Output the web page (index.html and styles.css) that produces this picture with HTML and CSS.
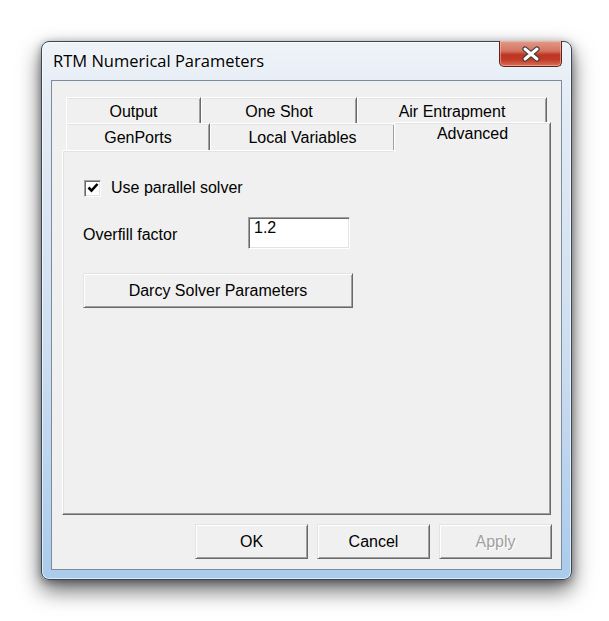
FILE: index.html
```html
<!DOCTYPE html>
<html>
<head>
<meta charset="utf-8">
<link rel="stylesheet" href="styles.css">
</head>
<body>
<div class="stage">
  <div class="window">
    <div class="titlebar">
      <span class="title">RTM Numerical Parameters</span>
      <div class="close">
        <svg width="20" height="16" viewBox="0 0 20 16">
          <path d="M4 3 L16 13 M16 3 L4 13" stroke="#3b3b3b" stroke-width="5.2" stroke-linecap="round" fill="none"/>
          <path d="M4 3 L16 13 M16 3 L4 13" stroke="#ffffff" stroke-width="3" stroke-linecap="round" fill="none"/>
        </svg>
      </div>
    </div>
    <div class="client">
      <div class="tabctl">
        <div class="tabrow back">
          <div class="tab w-output">Output</div>
          <div class="tab w-oneshot">One Shot</div>
          <div class="tab w-air">Air Entrapment</div>
        </div>
        <div class="tabrow front">
          <div class="tab w-genports">GenPorts</div>
          <div class="tab w-local">Local Variables</div>
          <div class="tab selected w-adv">Advanced</div>
        </div>
        <div class="panel">
          <div class="check-row">
            <span class="checkbox">
              <svg width="12" height="12" viewBox="0 0 12 12">
                <path d="M1.5 5.5 L4.5 8.7 L10.5 2" stroke="#000" stroke-width="2.6" fill="none"/>
              </svg>
            </span>
            <span class="check-label">Use parallel solver</span>
          </div>
          <div class="field-row">
            <span class="field-label">Overfill factor</span>
            <span class="input">1.2</span>
          </div>
          <div class="btn wide">Darcy Solver Parameters</div>
        </div>
      </div>
      <div class="actions">
        <div class="btn">OK</div>
        <div class="btn">Cancel</div>
        <div class="btn disabled">Apply</div>
      </div>
    </div>
  </div>
</div>
</body>
</html>
```
FILE: styles.css
```css
html, body {
  margin: 0;
  padding: 0;
  background: #ffffff;
}

.stage {
  padding: 41px 0 0 41px;
  width: 609px;
  height: 621px;
  box-sizing: border-box;
  font-family: "Liberation Sans", Arial, sans-serif;
  font-size: 16px;
  color: #000;
}

.window {
  width: 531px;
  height: 539px;
  box-sizing: border-box;
  border: 1px solid #3a4756;
  border-radius: 8px;
  background: linear-gradient(to bottom, #eef3f8 0%, #e3ebf4 12%, #cfdff0 55%, #aacbec 100%);
  box-shadow: 0 10px 22px rgba(0, 0, 0, 0.6), 0 2px 8px rgba(0, 0, 0, 0.35), inset 0 0 0 1px rgba(255, 255, 255, 0.6);
  padding: 0 9px 9px 9px;
  display: flex;
  flex-direction: column;
}

.titlebar {
  height: 38px;
  display: flex;
  justify-content: space-between;
  align-items: flex-start;
  padding-left: 2px;
}

.title {
  font-family: "Open Sans", "Noto Sans", sans-serif;
  font-size: 16.5px;
  line-height: 20px;
  margin-top: 9px;
  color: #000;
  text-shadow: 0 0 6px rgba(255, 255, 255, 0.9);
}

.close {
  width: 63px;
  height: 26px;
  margin-top: -1px;
  box-sizing: border-box;
  border: 1px solid #5b2419;
  border-top: none;
  border-radius: 0 0 5px 5px;
  background: linear-gradient(to bottom, #e39a89 0%, #d37461 40%, #bd3522 55%, #c03c27 75%, #d8705a 100%);
  box-shadow: inset 0 0 0 1px rgba(255, 200, 190, 0.5);
  display: flex;
  align-items: center;
  justify-content: center;
}

.client {
  width: 511px;
  height: 490px;
  box-sizing: border-box;
  border: 1px solid #7d8c9c;
  background: #f0f0f0;
  display: flex;
  flex-direction: column;
}

.tabctl {
  margin: 16px 0 0 10px;
  width: 489px;
  display: flex;
  flex-direction: column;
}

.tabrow {
  display: flex;
  padding-left: 4px;
  align-items: flex-end;
}

.tabrow.back {
  height: 26px;
}

.tabrow.front {
  height: 27px;
}

.tab {
  box-sizing: border-box;
  height: 100%;
  background: #f0f0f0;
  border-top: 1px solid #ffffff;
  border-left: 1px solid #ffffff;
  border-right: 1px solid #696969;
  box-shadow: inset 0 1px 0 #e3e3e3, inset -1px 0 0 #a0a0a0;
  display: flex;
  justify-content: center;
  padding-top: 5px;
  line-height: 18px;
  white-space: nowrap;
}

.w-output { width: 135px; }
.w-oneshot { width: 156px; }
.w-air { width: 190px; }
.w-genports { width: 144px; }
.w-local { width: 185px; }
.w-adv { width: 157px; }

.tab.selected {
  height: 30px;
  margin-bottom: -2px;
  margin-left: -1px;
  position: relative;
  z-index: 2;
  padding-top: 2px;
}

.panel {
  height: 365px;
  box-sizing: border-box;
  background: #f0f0f0;
  border-top: 1px solid #ffffff;
  border-left: 1px solid #ffffff;
  border-right: 1px solid #696969;
  border-bottom: 1px solid #696969;
  box-shadow: inset -1px -1px 0 #a0a0a0, inset 1px 1px 0 #e3e3e3;
  padding: 28px 0 0 20px;
  display: flex;
  flex-direction: column;
  align-items: flex-start;
}

.check-row {
  display: flex;
  align-items: center;
  height: 18px;
  line-height: 18px;
  margin-left: 1px;
}

.checkbox {
  width: 17px;
  height: 17px;
  box-sizing: border-box;
  background: #ffffff;
  border-top: 1px solid #a0a0a0;
  border-left: 1px solid #a0a0a0;
  border-right: 1px solid #ffffff;
  border-bottom: 1px solid #ffffff;
  box-shadow: inset 1px 1px 0 #696969, inset -1px -1px 0 #e3e3e3;
  display: flex;
  align-items: center;
  justify-content: center;
  margin-right: 10px;
}

.field-row {
  display: flex;
  align-items: center;
  margin-top: 20px;
  height: 32px;
}

.field-label {
  width: 165px;
  line-height: 18px;
  padding-top: 3px;
}

.input {
  width: 102px;
  height: 32px;
  box-sizing: border-box;
  background: #ffffff;
  border-top: 1px solid #a0a0a0;
  border-left: 1px solid #a0a0a0;
  border-right: 1px solid #ffffff;
  border-bottom: 1px solid #ffffff;
  box-shadow: inset 1px 1px 0 #696969, inset -1px -1px 0 #e3e3e3;
  padding: 1px 0 0 5px;
  line-height: 18px;
}

.btn {
  width: 113px;
  height: 35px;
  box-sizing: border-box;
  background: #f0f0f0;
  border-top: 1px solid #e3e3e3;
  border-left: 1px solid #e3e3e3;
  border-right: 1px solid #696969;
  border-bottom: 1px solid #696969;
  box-shadow: inset 1px 1px 0 #ffffff, inset -1px -1px 0 #a0a0a0;
  display: flex;
  align-items: center;
  justify-content: center;
  line-height: 18px;
  white-space: nowrap;
}

.btn.wide {
  width: 270px;
  margin-top: 24px;
}

.btn.disabled {
  color: #a0a0a0;
  text-shadow: 1px 1px 0 #ffffff;
}

.actions {
  display: flex;
  justify-content: flex-end;
  gap: 9px;
  margin-top: 9px;
  padding-right: 9px;
}
```
